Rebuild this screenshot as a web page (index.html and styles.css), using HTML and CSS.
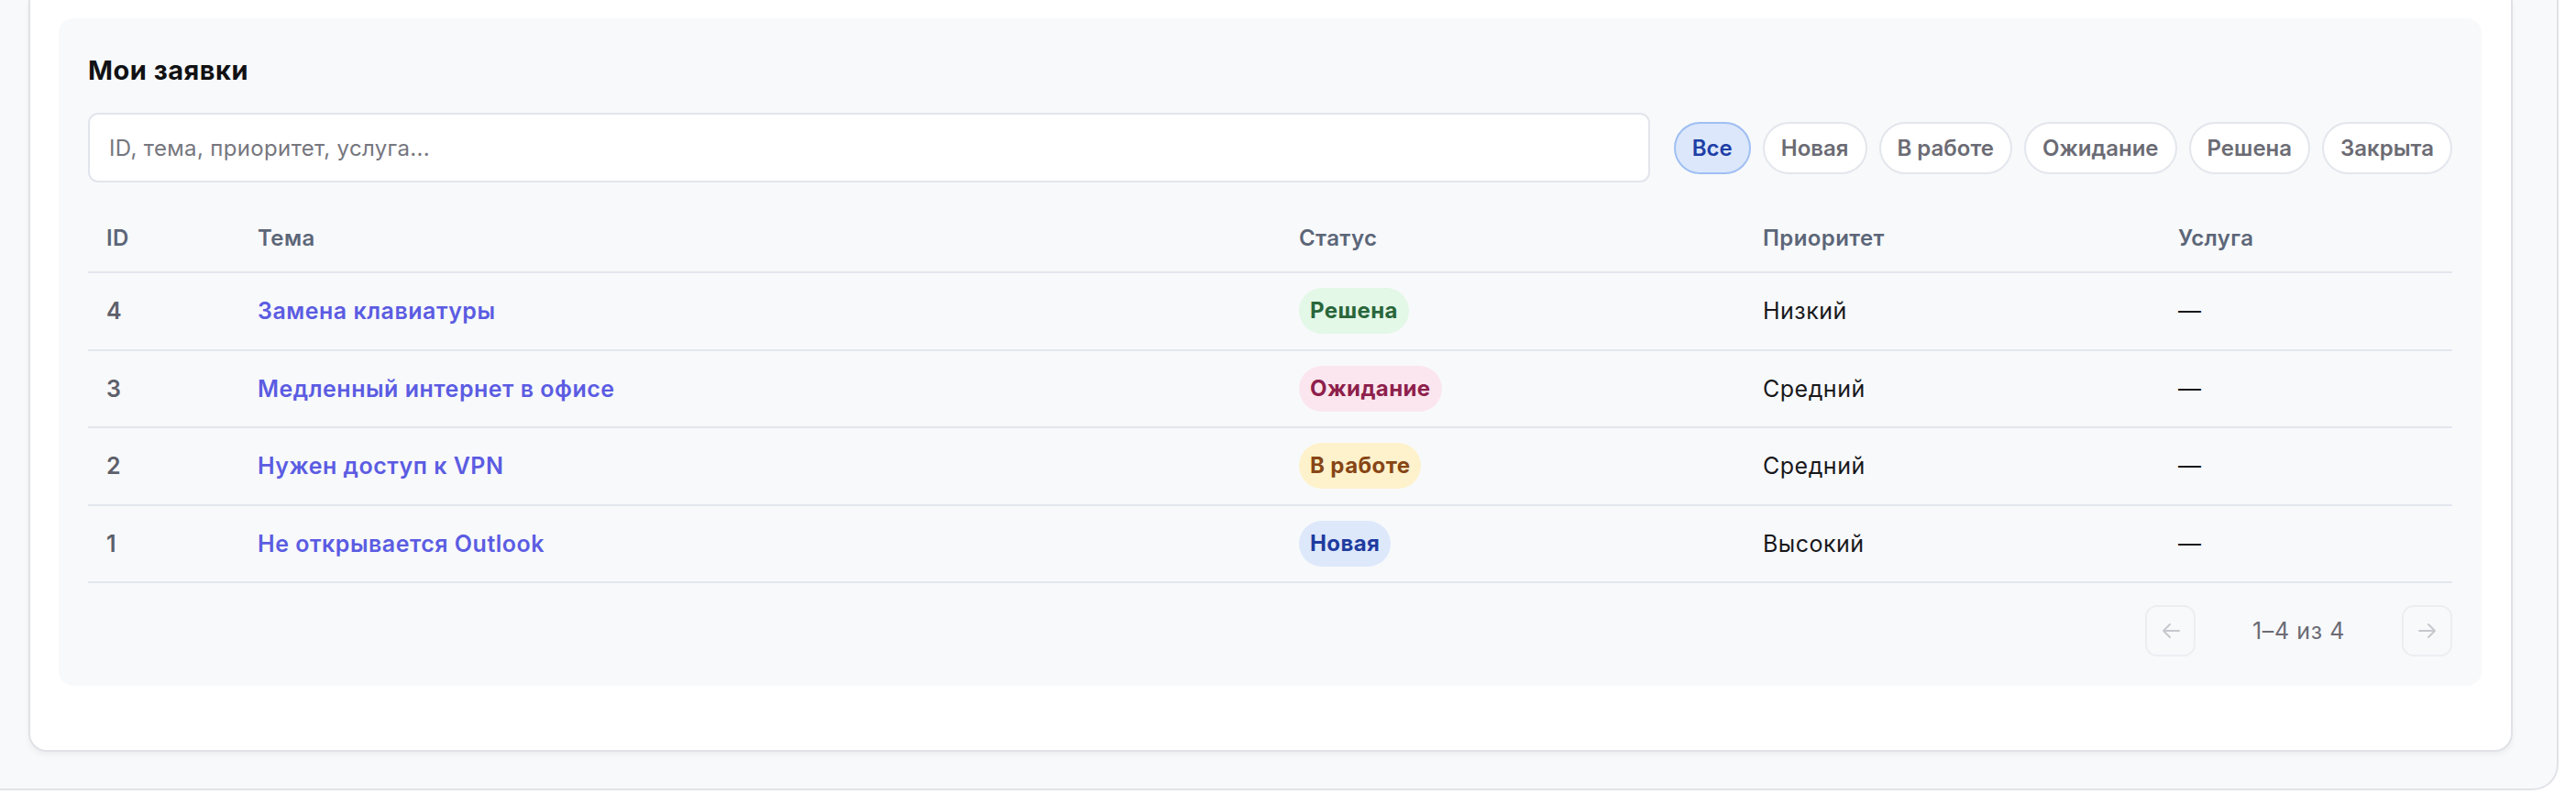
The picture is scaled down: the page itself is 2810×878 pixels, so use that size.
FILE: index.html
```html
<!DOCTYPE html>
<html lang="ru">
<head>
    <meta charset="UTF-8">
    <meta name="viewport" content="width=device-width, initial-scale=1.0">
    <title>Мои заявки</title>
    <link rel="stylesheet" href="styles.css">
</head>
<body>
    <div class="shell">
        <div class="card">
            <section class="tickets">
                <h2>Мои заявки</h2>
                <div class="toolbar">
                    <input type="text" class="search" placeholder="ID, тема, приоритет, услуга...">
                    <div class="filters">
                        <button class="chip active">Все</button>
                        <button class="chip">Новая</button>
                        <button class="chip">В работе</button>
                        <button class="chip">Ожидание</button>
                        <button class="chip">Решена</button>
                        <button class="chip">Закрыта</button>
                    </div>
                </div>

                <table class="grid">
                    <thead>
                        <tr>
                            <th class="col-id">ID</th>
                            <th class="col-topic">Тема</th>
                            <th class="col-status">Статус</th>
                            <th class="col-prio">Приоритет</th>
                            <th class="col-service">Услуга</th>
                        </tr>
                    </thead>
                    <tbody>
                        <tr>
                            <td class="id">4</td>
                            <td><a href="#" class="topic">Замена клавиатуры</a></td>
                            <td><span class="status solved">Решена</span></td>
                            <td>Низкий</td>
                            <td>—</td>
                        </tr>
                        <tr>
                            <td class="id">3</td>
                            <td><a href="#" class="topic">Медленный интернет в офисе</a></td>
                            <td><span class="status waiting">Ожидание</span></td>
                            <td>Средний</td>
                            <td>—</td>
                        </tr>
                        <tr>
                            <td class="id">2</td>
                            <td><a href="#" class="topic">Нужен доступ к VPN</a></td>
                            <td><span class="status progress">В работе</span></td>
                            <td>Средний</td>
                            <td>—</td>
                        </tr>
                        <tr>
                            <td class="id">1</td>
                            <td><a href="#" class="topic">Не открывается Outlook</a></td>
                            <td><span class="status new">Новая</span></td>
                            <td>Высокий</td>
                            <td>—</td>
                        </tr>
                    </tbody>
                </table>

                <div class="pager">
                    <button class="page-btn" disabled>
                        <svg width="22" height="18" viewBox="0 0 22 18"><path d="M20 9H3M10 2L3 9l7 7" fill="none" stroke="currentColor" stroke-width="2" stroke-linecap="round" stroke-linejoin="round"/></svg>
                    </button>
                    <span class="page-info">1–4 из 4</span>
                    <button class="page-btn" disabled>
                        <svg width="22" height="18" viewBox="0 0 22 18"><path d="M2 9h17M12 2l7 7-7 7" fill="none" stroke="currentColor" stroke-width="2" stroke-linecap="round" stroke-linejoin="round"/></svg>
                    </button>
                </div>
            </section>
        </div>
    </div>
</body>
</html>
```

FILE: styles.css
```css
* { box-sizing: border-box; }
body { margin: 0; background: #ffffff; font-family: Inter, "Noto Sans", sans-serif; color: #18181b; }

.shell { width: 2791px; background: #f8f9fb; padding: 0 48px 40px 31px; border-right: 2px solid #e2e3e8; border-bottom: 2px solid #e2e3e8; border-bottom-right-radius: 28px; }
.card { background: #ffffff; border: 2px solid #e1e2e7; border-top: 0; border-radius: 0 0 20px 20px; padding: 20px 32px 70px 31px; box-shadow: 0 3px 6px rgba(20, 20, 40, 0.05); }

.tickets { background: #f8f9fb; border-radius: 16px; padding: 32px; }
.tickets h2 { margin: 0 0 21px; font-size: 29px; line-height: 50px; font-weight: 700; letter-spacing: 0.5px; color: #111114; }

.toolbar { display: flex; align-items: center; gap: 26px; }
.search { flex: 1; height: 76px; padding: 0 21px; font: 400 24px Inter, sans-serif; letter-spacing: 0.35px; color: #18181b; background: #ffffff; border: 2px solid #e2e5ec; border-radius: 11px; outline: none; }
.search::placeholder { color: #76767e; }

.filters { display: flex; gap: 13px; }
.chip { height: 57px; padding: 0 18px; font: 600 24px Inter, sans-serif; color: #6b6b74; background: #ffffff; border: 2px solid #e3e6ec; border-radius: 29px; cursor: pointer; }
.chip.active { color: #1e3ea6; background: #dce7fb; border-color: #9fbff3; }

.grid { width: 100%; margin-top: 24px; border-collapse: collapse; table-layout: fixed; font-size: 25px; letter-spacing: 0.5px; }
.grid th { text-align: left; padding: 24px 20px; font-size: 24px; line-height: 25px; font-weight: 600; letter-spacing: 0.4px; color: #5c6678; border-bottom: 2px solid #e2e7ee; }
.grid td { height: 84.5px; padding: 0 20px; line-height: 50px; color: #18181b; border-bottom: 2px solid #e2e7ee; vertical-align: middle; }
.col-id { width: 165px; }
.col-topic { width: 1136px; }
.col-status { width: 506px; }
.col-prio { width: 453px; }
.col-service { width: 319px; }
.grid td.id { color: #5d606a; font-weight: 600; }

.topic { color: #5b5ce2; font-weight: 600; text-decoration: none; }

.status { display: inline-block; vertical-align: top; height: 50px; line-height: 50px; padding: 0 12px; border-radius: 25px; font-size: 24px; font-weight: 700; letter-spacing: 0.4px; }
.status.solved { background: #e3f8e7; color: #29663a; }
.status.waiting { background: #fbe6ef; color: #8e1f4c; }
.status.progress { background: #fdf2cb; color: #874515; }
.status.new { background: #dde8fb; color: #1f3b9f; }

.pager { display: flex; justify-content: flex-end; align-items: center; gap: 62px; margin-top: 24px; }
.page-btn { width: 55px; height: 56px; display: flex; align-items: center; justify-content: center; background: transparent; border: 2px solid #eceef2; border-radius: 13px; color: #c6c8ce; padding: 0; }
.page-info { font-size: 25px; letter-spacing: 0.6px; color: #6b6b74; }
```
